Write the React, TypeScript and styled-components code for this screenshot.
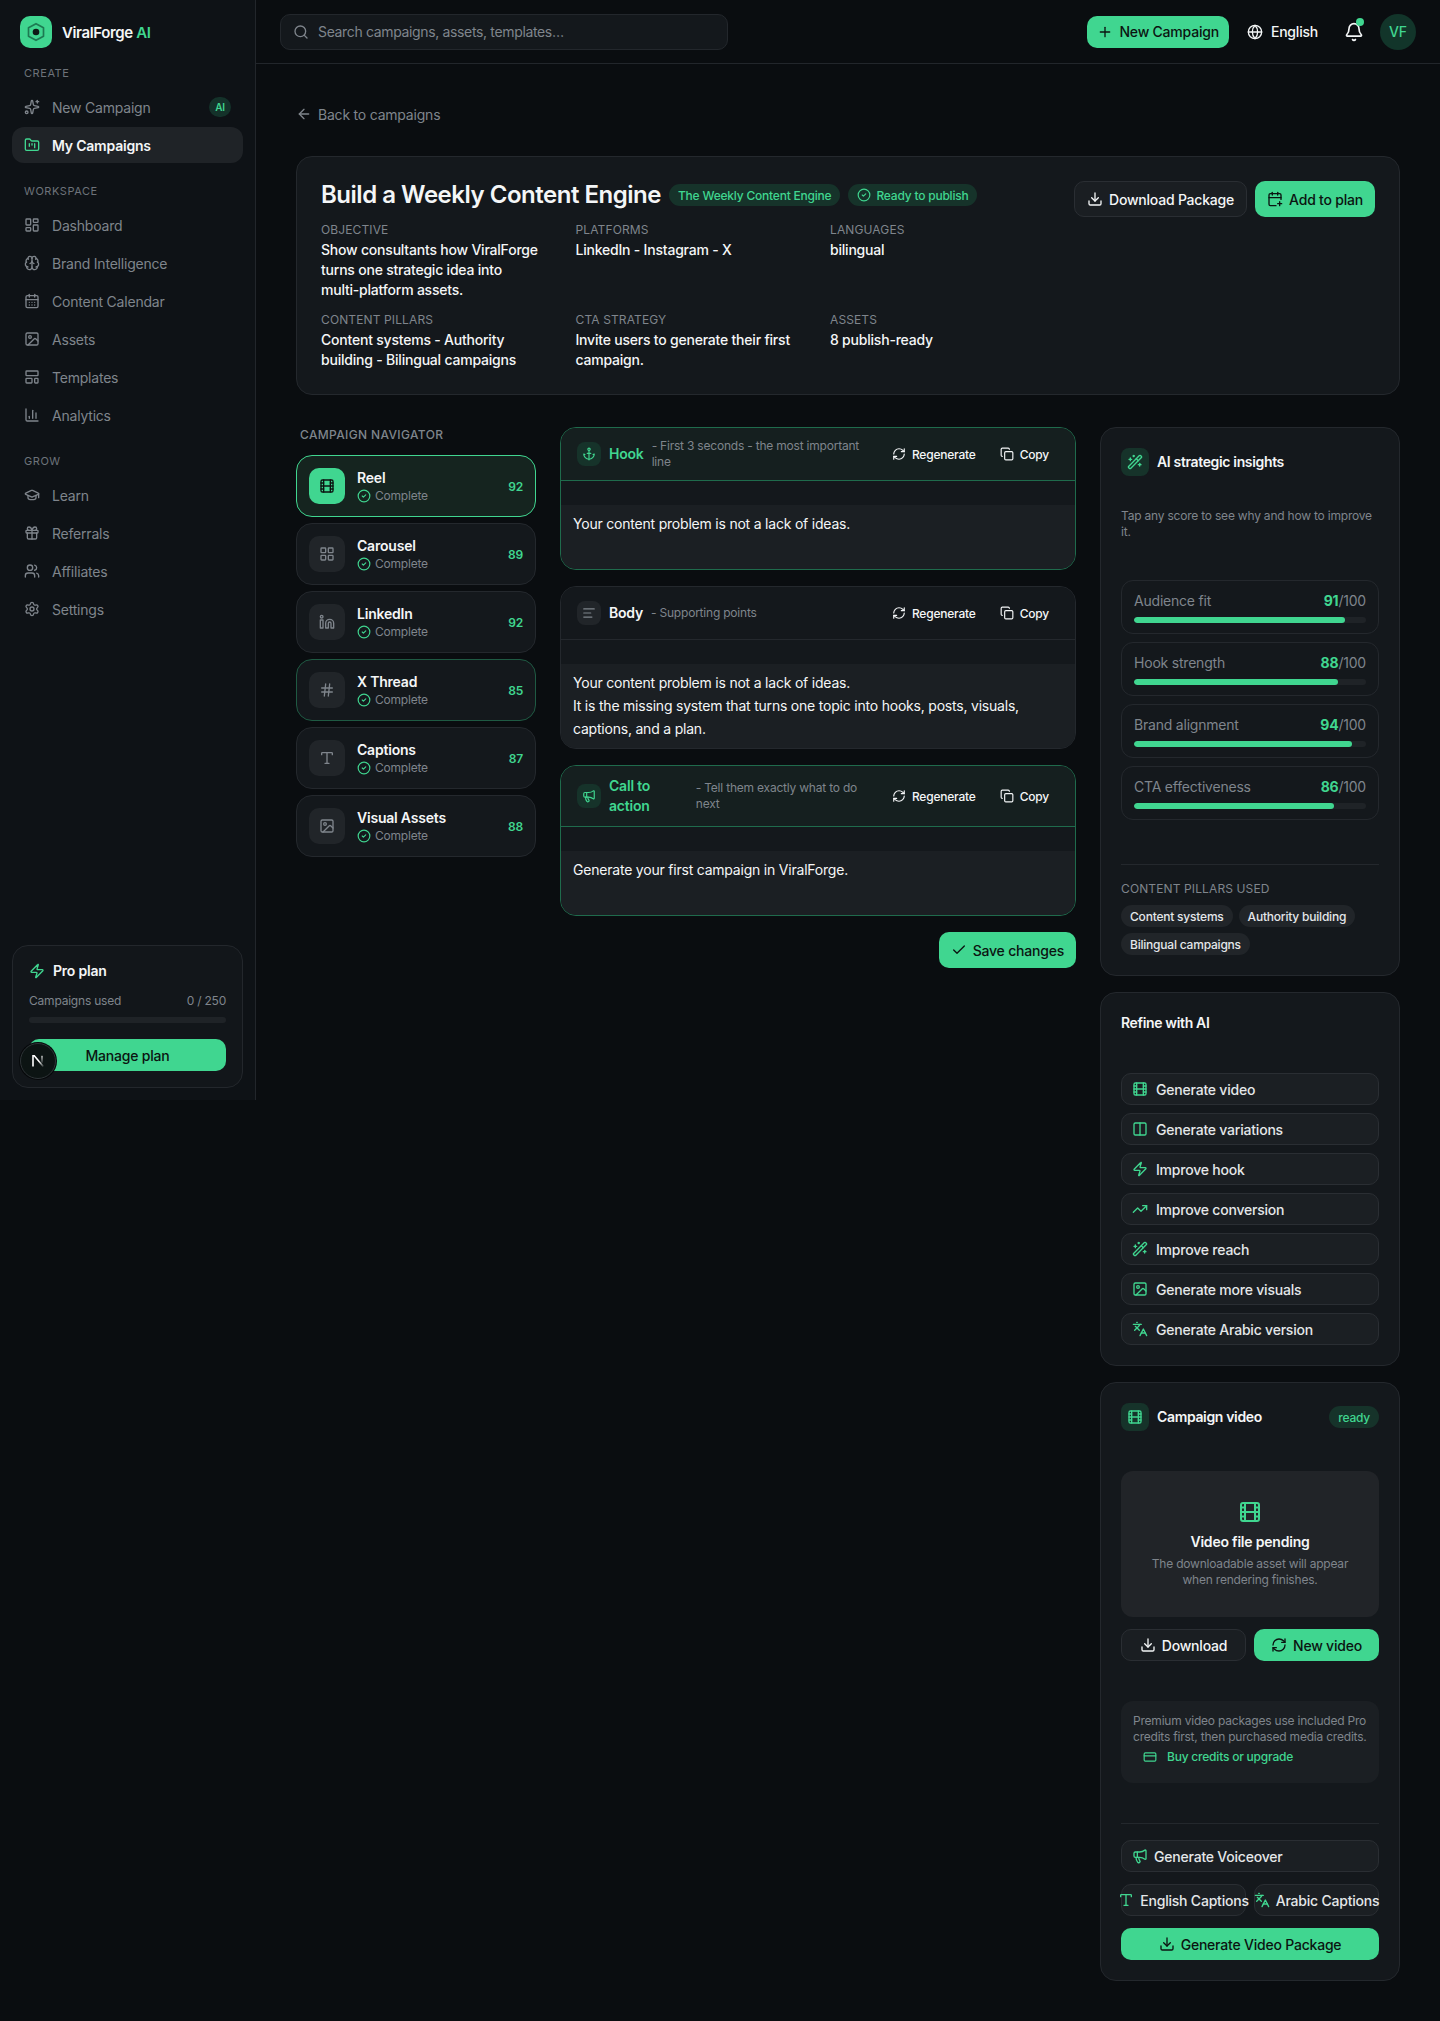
import React from 'react'
import styled, { createGlobalStyle } from 'styled-components'
import {
  Anchor,
  AlignLeft,
  ArrowLeft,
  Bell,
  Brain,
  CalendarDays,
  CalendarPlus,
  ChartColumn,
  Check,
  CircleCheck,
  Columns2,
  Copy,
  CreditCard,
  Download,
  Film,
  FolderKanban,
  Gift,
  Globe,
  GraduationCap,
  Hash,
  Image,
  Languages,
  LayoutDashboard,
  LayoutGrid,
  LayoutTemplate,
  Linkedin,
  Megaphone,
  Plus,
  RefreshCw,
  Search,
  Settings,
  Sparkles,
  TrendingUp,
  Type,
  Users,
  WandSparkles,
  Zap,
} from 'lucide-react'

const green = '#40d690'
const ink = '#0b1411'
const cardBg = '#14181c'
const fieldBg = '#1b1f23'
const line = '#24282d'
const muted = '#7f858c'

const GlobalStyle = createGlobalStyle`
  * { box-sizing: border-box; }
  html, body { margin: 0; padding: 0; background: #0a0d10; }
  body {
    font-family: Inter, 'Noto Sans', sans-serif;
    color: #f4f6f7;
    font-size: 14px;
    letter-spacing: -0.015em;
  }
`

const Shell = styled.div`
  position: relative;
  display: flex;
  align-items: flex-start;
  width: 1440px;
`

/* sidebar */
const Sidebar = styled.aside`
  width: 256px;
  height: 1100px;
  flex-shrink: 0;
  display: flex;
  flex-direction: column;
  padding: 16px 12px 12px;
  background: #0e1216;
  border-right: 1px solid #22262b;
`
const Brand = styled.div`
  display: flex;
  align-items: center;
  gap: 10px;
  padding-left: 8px;
  margin-bottom: 17px;
  font-size: 15px;
  font-weight: 600;
  letter-spacing: -0.025em;
  span { color: ${green}; }
`
const LogoTile = styled.div`
  width: 32px;
  height: 32px;
  border-radius: 10px;
  display: grid;
  place-items: center;
  background: ${green};
`
const NavLabel = styled.div`
  height: 16px;
  line-height: 16px;
  padding-left: 12px;
  margin-bottom: 8px;
  font-size: 11px;
  letter-spacing: 0.05em;
  color: #6d737a;
`
const NavList = styled.nav`
  display: flex;
  flex-direction: column;
  gap: 2px;
  margin-bottom: 20px;
`
const NavRow = styled.div<{ $active?: boolean }>`
  height: 36px;
  display: flex;
  align-items: center;
  gap: 12px;
  padding: 0 12px;
  border-radius: 12px;
  font-weight: ${p => (p.$active ? 600 : 400)};
  color: ${p => (p.$active ? '#f4f6f7' : muted)};
  background: ${p => (p.$active ? '#1f2327' : 'transparent')};
  svg { color: ${p => (p.$active ? green : muted)}; flex-shrink: 0; }
`
const AiBadge = styled.span`
  margin-left: auto;
  width: 22px;
  height: 20px;
  border-radius: 10px;
  display: grid;
  place-items: center;
  font-size: 10px;
  font-weight: 600;
  color: ${green};
  background: #14322a;
`
const PlanCard = styled.div`
  margin-top: auto;
  padding: 15px 16px 16px;
  border: 1px solid #23272c;
  border-radius: 16px;
  background: #12161a;
`
const PlanHead = styled.div`
  display: flex;
  align-items: center;
  gap: 8px;
  line-height: 20px;
  font-weight: 600;
  svg { color: ${green}; }
`
const PlanUsage = styled.div`
  display: flex;
  justify-content: space-between;
  margin-top: 12px;
  font-size: 12px;
  line-height: 16px;
  color: ${muted};
`
const PlanBar = styled.div`
  height: 6px;
  margin-top: 8px;
  border-radius: 3px;
  background: #1f2327;
`
const PlanButton = styled.div`
  height: 32px;
  margin-top: 16px;
  border-radius: 10px;
  display: grid;
  place-items: center;
  font-weight: 500;
  color: ${ink};
  background: ${green};
`
const DevBadge = styled.div`
  position: absolute;
  left: 20px;
  top: 1043px;
  width: 36px;
  height: 36px;
  border-radius: 50%;
  display: grid;
  place-items: center;
  background: #0c1413;
  border: 1px solid #2e3437;
  box-shadow: 0 0 0 1px #06080a;
`

/* top bar */
const Column = styled.div`
  flex: 1;
  min-width: 0;
`
const TopBar = styled.header`
  height: 64px;
  display: flex;
  align-items: center;
  justify-content: space-between;
  padding: 0 24px;
  border-bottom: 1px solid #22262b;
`
const SearchBox = styled.div`
  width: 448px;
  height: 36px;
  display: flex;
  align-items: center;
  gap: 9px;
  padding: 0 12px;
  border: 1px solid #23272c;
  border-radius: 10px;
  background: #14181c;
  letter-spacing: -0.025em;
  color: ${muted};
`
const TopActions = styled.div`
  display: flex;
  align-items: center;
  gap: 8px;
`
const LangButton = styled.div`
  display: flex;
  align-items: center;
  gap: 8px;
  padding: 0 10px;
  font-weight: 500;
`
const BellButton = styled.div`
  position: relative;
  width: 36px;
  height: 36px;
  display: grid;
  place-items: center;
`
const BellDot = styled.span`
  position: absolute;
  top: 4px;
  right: 8px;
  width: 8px;
  height: 8px;
  border-radius: 50%;
  background: ${green};
`
const Avatar = styled.div`
  width: 36px;
  height: 36px;
  border-radius: 50%;
  display: grid;
  place-items: center;
  font-weight: 500;
  color: ${green};
  background: #12352a;
`

/* buttons */
const Button = styled.div<{ $primary?: boolean; $h?: number }>`
  height: ${p => p.$h ?? 32}px;
  display: flex;
  align-items: center;
  justify-content: center;
  gap: 6px;
  padding: 0 ${p => (p.$h ? 12 : 10)}px;
  border-radius: 10px;
  white-space: nowrap;
  font-weight: 500;
  ${p =>
    p.$primary
      ? `color: ${ink}; background: ${green};`
      : `color: #f4f6f7; background: #1a1e22; border: 1px solid #2a2e33;`}
`

/* page */
const Content = styled.main`
  padding: 40px 40px 40px;
`
const BackLink = styled.div`
  display: flex;
  align-items: center;
  gap: 6px;
  height: 20px;
  color: ${muted};
`
const HeroCard = styled.section`
  display: flex;
  justify-content: space-between;
  margin-top: 32px;
  padding: 24px;
  border: 1px solid ${line};
  border-radius: 16px;
  background: ${cardBg};
`
const TitleRow = styled.div`
  display: flex;
  align-items: center;
  gap: 8px;
`
const Title = styled.h1`
  margin: 0;
  font-size: 24px;
  line-height: 28px;
  font-weight: 600;
  letter-spacing: -0.02em;
`
const Pill = styled.span`
  height: 22px;
  display: inline-flex;
  align-items: center;
  gap: 5px;
  padding: 0 9px;
  border-radius: 11px;
  font-size: 12px;
  font-weight: 500;
  color: ${green};
  background: #16332a;
`
const MetaGrid = styled.dl`
  display: grid;
  grid-template-columns: repeat(3, 220px);
  column-gap: 34.5px;
  row-gap: 12px;
  margin: 13px 0 0;
`
const MetaLabel = styled.dt`
  margin-bottom: 2px;
  font-size: 12px;
  line-height: 16px;
  letter-spacing: 0.01em;
  color: ${muted};
`
const MetaValue = styled.dd`
  margin: 0;
  line-height: 20px;
  font-weight: 500;
`
const HeroActions = styled.div`
  display: flex;
  gap: 8px;
`
const Workspace = styled.div`
  display: grid;
  grid-template-columns: 240px 516px 300px;
  column-gap: 24px;
  align-items: start;
  margin-top: 32px;
`

/* navigator */
const NavigatorTitle = styled.div`
  padding-left: 4px;
  margin-bottom: 12px;
  font-size: 12px;
  line-height: 16px;
  font-weight: 500;
  letter-spacing: 0.03em;
  color: ${muted};
`
const NavigatorList = styled.div`
  display: flex;
  flex-direction: column;
  gap: 6px;
`
const FormatCard = styled.div<{ $state?: 'active' | 'touched' }>`
  height: 62px;
  display: flex;
  align-items: center;
  gap: 12px;
  padding: 0 12px;
  border-radius: 16px;
  border: 1px solid
    ${p => (p.$state === 'active' ? green : p.$state === 'touched' ? '#1f5a43' : line)};
  background: ${p => (p.$state === 'active' ? '#15241f' : cardBg)};
`
const FormatIcon = styled.div<{ $active?: boolean }>`
  width: 36px;
  height: 36px;
  flex-shrink: 0;
  border-radius: 10px;
  display: grid;
  place-items: center;
  color: ${p => (p.$active ? ink : muted)};
  background: ${p => (p.$active ? green : '#212529')};
`
const FormatText = styled.div`
  flex: 1;
`
const FormatName = styled.div`
  line-height: 20px;
  font-weight: 600;
`
const FormatStatus = styled.div`
  display: flex;
  align-items: center;
  gap: 4px;
  font-size: 12px;
  line-height: 16px;
  color: ${muted};
  svg { color: ${green}; }
`
const FormatScore = styled.div`
  font-size: 12px;
  font-weight: 600;
  color: ${green};
`

/* editor */
const EditorColumn = styled.div`
  display: flex;
  flex-direction: column;
  gap: 16px;
`
const Section = styled.section<{ $accent?: boolean }>`
  border: 1px solid ${p => (p.$accent ? '#1f6b4c' : line)};
  border-radius: 16px;
  background: ${cardBg};
  overflow: hidden;
`
const SectionHead = styled.div<{ $accent?: boolean }>`
  display: flex;
  align-items: center;
  gap: 12px;
  min-height: 53px;
  padding: 10px 16px;
  border-bottom: 1px solid ${p => (p.$accent ? '#1f6b4c' : line)};
  background: ${p => (p.$accent ? '#151f1f' : cardBg)};
`
const SectionLabel = styled.div`
  flex: 1;
  min-width: 0;
  display: flex;
  align-items: center;
  gap: 8px;
`
const SectionIcon = styled.div<{ $accent?: boolean }>`
  width: 24px;
  height: 24px;
  flex-shrink: 0;
  border-radius: 8px;
  display: grid;
  place-items: center;
  color: ${p => (p.$accent ? green : muted)};
  background: ${p => (p.$accent ? '#16332a' : '#212529')};
`
const SectionName = styled.div<{ $accent?: boolean }>`
  line-height: 20px;
  font-weight: 600;
  color: ${p => (p.$accent ? green : '#f4f6f7')};
`
const SectionHint = styled.div`
  font-size: 12px;
  line-height: 16px;
  color: ${muted};
`
const SectionActions = styled.div`
  display: flex;
  gap: 4px;
  flex-shrink: 0;
`
const GhostButton = styled.div`
  height: 32px;
  display: flex;
  align-items: center;
  gap: 6px;
  padding: 0 10px;
  font-size: 12px;
  font-weight: 500;
`
const SectionBody = styled.div`
  min-height: 64px;
  margin-top: 24px;
  padding: 8px 12px;
  background: ${fieldBg};
  line-height: 22.75px;
`
const SaveRow = styled.div`
  display: flex;
  justify-content: flex-end;
`

/* right rail */
const Rail = styled.div`
  display: flex;
  flex-direction: column;
  gap: 16px;
`
const RailCard = styled.section`
  padding: 20px;
  border: 1px solid ${line};
  border-radius: 16px;
  background: ${cardBg};
`
const RailHead = styled.div`
  height: 28px;
  display: flex;
  align-items: center;
  gap: 8px;
`
const RailTile = styled.div`
  width: 28px;
  height: 28px;
  border-radius: 8px;
  display: grid;
  place-items: center;
  color: ${green};
  background: #16332a;
`
const RailTitle = styled.div<{ $grow?: boolean }>`
  flex: ${p => (p.$grow ? 1 : 'none')};
  line-height: 20px;
  font-weight: 600;
  letter-spacing: -0.025em;
`
const RailNote = styled.p`
  margin: 32px 0 0;
  font-size: 12px;
  line-height: 16px;
  color: ${muted};
`
const ScoreList = styled.div`
  display: flex;
  flex-direction: column;
  gap: 8px;
  margin-top: 40px;
`
const ScoreCard = styled.div`
  height: 54px;
  padding: 10px 12px;
  border: 1px solid ${line};
  border-radius: 12px;
`
const ScoreTop = styled.div`
  display: flex;
  justify-content: space-between;
  align-items: baseline;
  line-height: 20px;
  color: ${muted};
`
const ScoreValue = styled.span`
  b { font-weight: 700; color: ${green}; }
`
const ScoreTrack = styled.div`
  height: 6px;
  margin-top: 6px;
  border-radius: 3px;
  background: #1f2327;
  overflow: hidden;
`
const ScoreFill = styled.div`
  height: 100%;
  border-radius: 3px;
  background: ${green};
`
const Divider = styled.hr<{ $top: number }>`
  height: 1px;
  margin: ${p => p.$top}px 0 0;
  border: 0;
  background: ${line};
`
const PillarsLabel = styled.div`
  margin-top: 16px;
  font-size: 12px;
  line-height: 16px;
  letter-spacing: 0.01em;
  color: ${muted};
`
const PillarList = styled.div`
  display: flex;
  flex-wrap: wrap;
  gap: 6px;
  margin-top: 8px;
`
const PillarTag = styled.span`
  height: 22px;
  display: inline-flex;
  align-items: center;
  padding: 0 9px;
  border-radius: 11px;
  font-size: 12px;
  font-weight: 500;
  color: #e4e7e9;
  background: #212529;
`
const RefineList = styled.div`
  display: flex;
  flex-direction: column;
  gap: 8px;
  margin-top: 40px;
`
const RefineButton = styled.div<{ $gap?: number }>`
  height: 32px;
  display: flex;
  align-items: center;
  gap: ${p => p.$gap ?? 8}px;
  padding: 0 10px;
  border: 1px solid #2a2e33;
  border-radius: 10px;
  background: ${fieldBg};
  font-weight: 500;
  color: #e4e7e9;
  svg { color: ${green}; flex-shrink: 0; }
`
const VideoPreview = styled.div`
  height: 146px;
  margin-top: 40px;
  display: flex;
  flex-direction: column;
  align-items: center;
  justify-content: center;
  border-radius: 12px;
  background: #212428;
  text-align: center;
  svg { color: ${green}; margin-bottom: 8px; }
`
const PreviewTitle = styled.div`
  line-height: 20px;
  font-weight: 600;
  margin-bottom: 4px;
`
const PreviewText = styled.div`
  width: 220px;
  font-size: 12px;
  line-height: 16px;
  color: ${muted};
`
const TwoUp = styled.div<{ $top: number }>`
  display: grid;
  grid-template-columns: repeat(2, minmax(0, 1fr));
  gap: 8px;
  margin-top: ${p => p.$top}px;
`
const CreditNote = styled.div`
  height: 82px;
  margin-top: 40px;
  padding: 12px;
  border-radius: 12px;
  background: ${fieldBg};
  font-size: 12px;
  line-height: 16px;
  color: ${muted};
`
const CreditLink = styled.div`
  display: flex;
  align-items: center;
  gap: 10px;
  height: 20px;
  margin-top: 2px;
  padding-left: 10px;
  font-weight: 500;
  color: ${green};
`
const CaptionButton = styled(RefineButton)`
  justify-content: center;
  gap: 6px;
  white-space: nowrap;
`
const VoiceoverSlot = styled.div`
  margin-top: 16px;
`
const PackageSlot = styled.div`
  margin-top: 12px;
`

const createNav = [
  { icon: Sparkles, label: 'New Campaign', ai: true },
  { icon: FolderKanban, label: 'My Campaigns', active: true },
]
const workspaceNav = [
  { icon: LayoutDashboard, label: 'Dashboard' },
  { icon: Brain, label: 'Brand Intelligence' },
  { icon: CalendarDays, label: 'Content Calendar' },
  { icon: Image, label: 'Assets' },
  { icon: LayoutTemplate, label: 'Templates' },
  { icon: ChartColumn, label: 'Analytics' },
]
const growNav = [
  { icon: GraduationCap, label: 'Learn' },
  { icon: Gift, label: 'Referrals' },
  { icon: Users, label: 'Affiliates' },
  { icon: Settings, label: 'Settings' },
]
const formats = [
  { icon: Film, name: 'Reel', score: 92, state: 'active' as const },
  { icon: LayoutGrid, name: 'Carousel', score: 89 },
  { icon: Linkedin, name: 'LinkedIn', score: 92 },
  { icon: Hash, name: 'X Thread', score: 85, state: 'touched' as const },
  { icon: Type, name: 'Captions', score: 87 },
  { icon: Image, name: 'Visual Assets', score: 88 },
]
const sections = [
  {
    icon: Anchor,
    name: 'Hook',
    hint: '- First 3 seconds - the most important line',
    accent: true,
    lines: ['Your content problem is not a lack of ideas.'],
  },
  {
    icon: AlignLeft,
    name: 'Body',
    hint: '- Supporting points',
    lines: [
      'Your content problem is not a lack of ideas.',
      'It is the missing system that turns one topic into hooks, posts, visuals, captions, and a plan.',
    ],
  },
  {
    icon: Megaphone,
    name: 'Call to action',
    hint: '- Tell them exactly what to do next',
    accent: true,
    lines: ['Generate your first campaign in ViralForge.'],
  },
]
const scores = [
  { label: 'Audience fit', value: 91 },
  { label: 'Hook strength', value: 88 },
  { label: 'Brand alignment', value: 94 },
  { label: 'CTA effectiveness', value: 86 },
]
const refine = [
  { icon: Film, label: 'Generate video' },
  { icon: Columns2, label: 'Generate variations' },
  { icon: Zap, label: 'Improve hook' },
  { icon: TrendingUp, label: 'Improve conversion' },
  { icon: WandSparkles, label: 'Improve reach' },
  { icon: Image, label: 'Generate more visuals' },
  { icon: Languages, label: 'Generate Arabic version' },
]

function NavGroup({ label, items }: { label: string; items: any[] }) {
  return (
    <>
      <NavLabel>{label}</NavLabel>
      <NavList>
        {items.map(item => (
          <NavRow key={item.label} $active={item.active}>
            <item.icon size={16} />
            {item.label}
            {item.ai && <AiBadge>AI</AiBadge>}
          </NavRow>
        ))}
      </NavList>
    </>
  )
}

export default function App() {
  return (
    <Shell>
      <GlobalStyle />
      <Sidebar>
        <Brand>
          <LogoTile>
            <svg width="20" height="20" viewBox="0 0 24 24" fill="none">
              <path d="M12 2l9 5v10l-9 5-9-5V7z" stroke="#1d7a52" strokeWidth="2" strokeLinejoin="round" />
              <circle cx="12" cy="12" r="4" fill="#0e1a16" />
            </svg>
          </LogoTile>
          <div>
            ViralForge <span>AI</span>
          </div>
        </Brand>
        <NavGroup label="CREATE" items={createNav} />
        <NavGroup label="WORKSPACE" items={workspaceNav} />
        <NavGroup label="GROW" items={growNav} />
        <PlanCard>
          <PlanHead>
            <Zap size={16} />
            Pro plan
          </PlanHead>
          <PlanUsage>
            <span>Campaigns used</span>
            <span>0 / 250</span>
          </PlanUsage>
          <PlanBar />
          <PlanButton>Manage plan</PlanButton>
        </PlanCard>
      </Sidebar>
      <DevBadge>
        <svg width="14" height="14" viewBox="0 0 14 14" fill="none">
          <defs>
            <linearGradient id="nFade" x1="0" y1="0" x2="1" y2="1">
              <stop offset="0.55" stopColor="#fff" />
              <stop offset="1" stopColor="#fff" stopOpacity="0.15" />
            </linearGradient>
            <linearGradient id="nStem" x1="0" y1="0" x2="0" y2="1">
              <stop offset="0" stopColor="#fff" />
              <stop offset="1" stopColor="#fff" stopOpacity="0.2" />
            </linearGradient>
          </defs>
          <path d="M2 12.5V1.8h1.3l9 10.7" stroke="url(#nFade)" strokeWidth="1.6" />
          <rect x="10.4" y="1.8" width="1.2" height="7" fill="url(#nStem)" />
        </svg>
      </DevBadge>

      <Column>
        <TopBar>
          <SearchBox>
            <Search size={16} />
            Search campaigns, assets, templates…
          </SearchBox>
          <TopActions>
            <Button $primary>
              <Plus size={16} />
              New Campaign
            </Button>
            <LangButton>
              <Globe size={16} />
              English
            </LangButton>
            <BellButton>
              <Bell size={20} />
              <BellDot />
            </BellButton>
            <Avatar>VF</Avatar>
          </TopActions>
        </TopBar>

        <Content>
          <BackLink>
            <ArrowLeft size={16} />
            Back to campaigns
          </BackLink>

          <HeroCard>
            <div>
              <TitleRow>
                <Title>Build a Weekly Content Engine</Title>
                <Pill>The Weekly Content Engine</Pill>
                <Pill>
                  <CircleCheck size={14} />
                  Ready to publish
                </Pill>
              </TitleRow>
              <MetaGrid>
                <div>
                  <MetaLabel>OBJECTIVE</MetaLabel>
                  <MetaValue>Show consultants how ViralForge turns one strategic idea into multi-platform assets.</MetaValue>
                </div>
                <div>
                  <MetaLabel>PLATFORMS</MetaLabel>
                  <MetaValue>LinkedIn - Instagram - X</MetaValue>
                </div>
                <div>
                  <MetaLabel>LANGUAGES</MetaLabel>
                  <MetaValue>bilingual</MetaValue>
                </div>
                <div>
                  <MetaLabel>CONTENT PILLARS</MetaLabel>
                  <MetaValue>Content systems - Authority building - Bilingual campaigns</MetaValue>
                </div>
                <div>
                  <MetaLabel>CTA STRATEGY</MetaLabel>
                  <MetaValue>Invite users to generate their first campaign.</MetaValue>
                </div>
                <div>
                  <MetaLabel>ASSETS</MetaLabel>
                  <MetaValue>8 publish-ready</MetaValue>
                </div>
              </MetaGrid>
            </div>
            <HeroActions>
              <Button $h={36}>
                <Download size={16} />
                Download Package
              </Button>
              <Button $h={36} $primary>
                <CalendarPlus size={16} />
                Add to plan
              </Button>
            </HeroActions>
          </HeroCard>

          <Workspace>
            <div>
              <NavigatorTitle>CAMPAIGN NAVIGATOR</NavigatorTitle>
              <NavigatorList>
                {formats.map(f => (
                  <FormatCard key={f.name} $state={f.state}>
                    <FormatIcon $active={f.state === 'active'}>
                      <f.icon size={16} />
                    </FormatIcon>
                    <FormatText>
                      <FormatName>{f.name}</FormatName>
                      <FormatStatus>
                        <CircleCheck size={14} />
                        Complete
                      </FormatStatus>
                    </FormatText>
                    <FormatScore>{f.score}</FormatScore>
                  </FormatCard>
                ))}
              </NavigatorList>
            </div>

            <EditorColumn>
              {sections.map(s => (
                <Section key={s.name} $accent={s.accent}>
                  <SectionHead $accent={s.accent}>
                    <SectionLabel>
                      <SectionIcon $accent={s.accent}>
                        <s.icon size={14} />
                      </SectionIcon>
                      <SectionName $accent={s.accent}>{s.name}</SectionName>
                      <SectionHint>{s.hint}</SectionHint>
                    </SectionLabel>
                    <SectionActions>
                      <GhostButton>
                        <RefreshCw size={14} />
                        Regenerate
                      </GhostButton>
                      <GhostButton>
                        <Copy size={14} />
                        Copy
                      </GhostButton>
                    </SectionActions>
                  </SectionHead>
                  <SectionBody>
                    {s.lines.map(l => (
                      <div key={l}>{l}</div>
                    ))}
                  </SectionBody>
                </Section>
              ))}
              <SaveRow>
                <Button $h={36} $primary>
                  <Check size={16} />
                  Save changes
                </Button>
              </SaveRow>
            </EditorColumn>

            <Rail>
              <RailCard>
                <RailHead>
                  <RailTile>
                    <WandSparkles size={16} />
                  </RailTile>
                  <RailTitle>AI strategic insights</RailTitle>
                </RailHead>
                <RailNote>Tap any score to see why and how to improve it.</RailNote>
                <ScoreList>
                  {scores.map(s => (
                    <ScoreCard key={s.label}>
                      <ScoreTop>
                        {s.label}
                        <ScoreValue>
                          <b>{s.value}</b>/100
                        </ScoreValue>
                      </ScoreTop>
                      <ScoreTrack>
                        <ScoreFill style={{ width: `${s.value}%` }} />
                      </ScoreTrack>
                    </ScoreCard>
                  ))}
                </ScoreList>
                <Divider $top={44} />
                <PillarsLabel>CONTENT PILLARS USED</PillarsLabel>
                <PillarList>
                  <PillarTag>Content systems</PillarTag>
                  <PillarTag>Authority building</PillarTag>
                  <PillarTag>Bilingual campaigns</PillarTag>
                </PillarList>
              </RailCard>

              <RailCard>
                <RailTitle>Refine with AI</RailTitle>
                <RefineList>
                  {refine.map(r => (
                    <RefineButton key={r.label}>
                      <r.icon size={16} />
                      {r.label}
                    </RefineButton>
                  ))}
                </RefineList>
              </RailCard>

              <RailCard>
                <RailHead>
                  <RailTile>
                    <Film size={16} />
                  </RailTile>
                  <RailTitle $grow>Campaign video</RailTitle>
                  <Pill>ready</Pill>
                </RailHead>
                <VideoPreview>
                  <Film size={24} />
                  <PreviewTitle>Video file pending</PreviewTitle>
                  <PreviewText>The downloadable asset will appear when rendering finishes.</PreviewText>
                </VideoPreview>
                <TwoUp $top={12}>
                  <Button>
                    <Download size={16} />
                    Download
                  </Button>
                  <Button $primary>
                    <RefreshCw size={16} />
                    New video
                  </Button>
                </TwoUp>
                <CreditNote>
                  Premium video packages use included Pro credits first, then purchased media credits.
                  <CreditLink>
                    <CreditCard size={14} />
                    Buy credits or upgrade
                  </CreditLink>
                </CreditNote>
                <Divider $top={40} />
                <VoiceoverSlot>
                  <RefineButton $gap={6}>
                    <Megaphone size={16} />
                    Generate Voiceover
                  </RefineButton>
                </VoiceoverSlot>
                <TwoUp $top={12}>
                  <CaptionButton>
                    <Type size={16} />
                    English Captions
                  </CaptionButton>
                  <CaptionButton>
                    <Languages size={16} />
                    Arabic Captions
                  </CaptionButton>
                </TwoUp>
                <PackageSlot>
                  <Button $primary>
                    <Download size={16} />
                    Generate Video Package
                  </Button>
                </PackageSlot>
              </RailCard>
            </Rail>
          </Workspace>
        </Content>
      </Column>
    </Shell>
  )
}
